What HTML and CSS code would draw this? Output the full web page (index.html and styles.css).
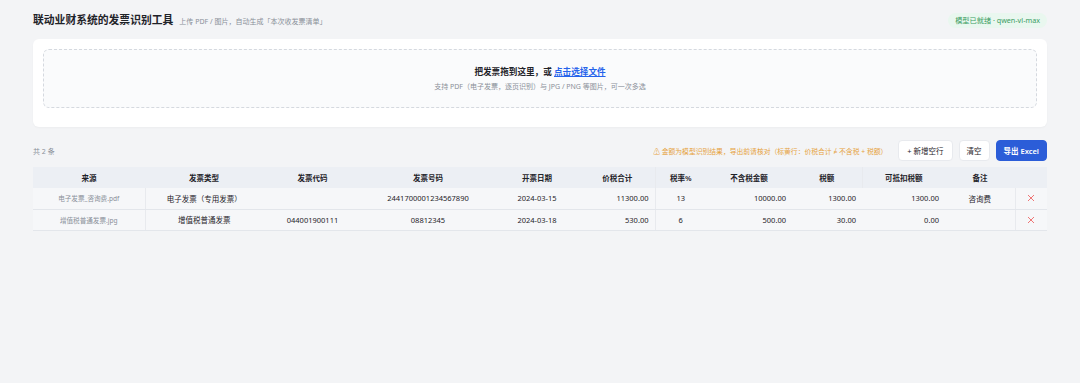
FILE: index.html
```html
<!DOCTYPE html>
<html lang="zh-CN">
<head>
    <meta charset="utf-8">
    <title>联动业财系统的发票识别工具</title>
    <link rel="stylesheet" href="styles.css">
</head>
<body>
    <div class="page">
        <header class="topbar">
            <div class="title-group">
                <h1>联动业财系统的发票识别工具</h1>
                <span class="subtitle">上传 PDF / 图片，自动生成「本次收发票清单」</span>
            </div>
            <span class="badge">模型已就绪 · qwen-vl-max</span>
        </header>

        <section class="card">
            <div class="dropzone">
                <p class="drop-title">把发票拖到这里，或 <a href="#">点击选择文件</a></p>
                <p class="drop-hint">支持 PDF（电子发票，逐页识别）与 JPG / PNG 等图片，可一次多选</p>
            </div>
        </section>

        <div class="toolbar">
            <span class="count">共 2 条</span>
            <div class="actions">
                <span class="warn">⚠ 金额为模型识别结果，导出前请核对（标黄行：价税合计 ≠ 不含税 + 税额）</span>
                <button class="btn">+ 新增空行</button>
                <button class="btn btn-small">清空</button>
                <button class="btn btn-primary">导出 Excel</button>
            </div>
        </div>

        <table class="invoice-table">
            <colgroup>
                <col style="width:112px">
                <col style="width:118px">
                <col style="width:99px">
                <col style="width:132px">
                <col style="width:86px">
                <col style="width:75px">
                <col style="width:51px">
                <col style="width:86px">
                <col style="width:70px">
                <col style="width:83px">
                <col style="width:70px">
                <col style="width:32px">
            </colgroup>
            <thead>
                <tr>
                    <th>来源</th>
                    <th>发票类型</th>
                    <th>发票代码</th>
                    <th>发票号码</th>
                    <th>开票日期</th>
                    <th class="line">价税合计</th>
                    <th>税率%</th>
                    <th>不含税金额</th>
                    <th class="line">税额</th>
                    <th>可抵扣税额</th>
                    <th>备注</th>
                    <th></th>
                </tr>
            </thead>
            <tbody>
                <tr>
                    <td class="src line">电子发票_咨询费.pdf</td>
                    <td>电子发票（专用发票）</td>
                    <td></td>
                    <td>2441700001234567890</td>
                    <td>2024-03-15</td>
                    <td class="num line">11300.00</td>
                    <td>13</td>
                    <td class="num">10000.00</td>
                    <td class="num">1300.00</td>
                    <td class="num">1300.00</td>
                    <td class="line">咨询费</td>
                    <td class="del">
                        <svg class="del-icon" viewBox="0 0 8 8"><path d="M1 1L7 7M7 1L1 7"/></svg>
                    </td>
                </tr>
                <tr>
                    <td class="src line">增值税普通发票.jpg</td>
                    <td>增值税普通发票</td>
                    <td>044001900111</td>
                    <td>08812345</td>
                    <td>2024-03-18</td>
                    <td class="num line">530.00</td>
                    <td>6</td>
                    <td class="num">500.00</td>
                    <td class="num">30.00</td>
                    <td class="num">0.00</td>
                    <td class="line"></td>
                    <td class="del">
                        <svg class="del-icon" viewBox="0 0 8 8"><path d="M1 1L7 7M7 1L1 7"/></svg>
                    </td>
                </tr>
            </tbody>
        </table>
    </div>
</body>
</html>
```

FILE: styles.css
```css
* {
    box-sizing: border-box;
}

body {
    margin: 0;
    background-color: #f3f4f6;
    font-family: "Noto Sans", "Noto Sans CJK SC", sans-serif;
    color: #1f2329;
}

.page {
    padding: 12px 33px 20px;
}

.topbar {
    display: flex;
    align-items: center;
    justify-content: space-between;
    height: 16px;
    margin-bottom: 11px;
}

.title-group {
    display: flex;
    align-items: baseline;
    gap: 6px;
}

h1 {
    margin: 0;
    font-size: 10.8px;
    font-weight: 700;
    line-height: 16px;
    color: #1f2329;
}

.subtitle {
    font-size: 7px;
    color: #8a9099;
}

.badge {
    padding: 3px 7px;
    border-radius: 8px;
    background-color: #e9f7ef;
    color: #3a9d62;
    font-size: 7.2px;
    line-height: 9px;
}

.card {
    background-color: #fff;
    border-radius: 6px;
    padding: 10px 10px 19px;
    box-shadow: 0 1px 2px rgba(0, 0, 0, 0.03);
}

.dropzone {
    height: 59px;
    border: 1px dashed #d5d9df;
    border-radius: 6px;
    background-color: #fafbfc;
    display: flex;
    flex-direction: column;
    align-items: center;
    justify-content: center;
    gap: 4px;
}

.dropzone p {
    margin: 0;
}

.drop-title {
    font-size: 8.6px;
    font-weight: 700;
    line-height: 11px;
    color: #1f2329;
}

.drop-title a {
    color: #2563eb;
    text-decoration: underline;
}

.drop-hint {
    font-size: 7px;
    line-height: 9px;
    color: #8a9099;
}

.toolbar {
    display: flex;
    align-items: center;
    justify-content: space-between;
    margin-top: 13px;
    height: 21px;
}

.count {
    font-size: 7px;
    color: #8a9099;
}

.actions {
    display: flex;
    align-items: center;
    gap: 6px;
}

.warn {
    margin-right: 5px;
    font-size: 6.8px;
    color: #e6a23c;
}

.btn {
    height: 21px;
    padding: 0 8px;
    border: 1px solid #e8eaee;
    border-radius: 4px;
    background-color: #fff;
    color: #1f2329;
    font-family: inherit;
    font-size: 7.5px;
    cursor: pointer;
}

.btn-small {
    padding: 0 7px;
}

.btn-primary {
    padding: 0 7px;
    border-color: #2b5dd8;
    background-color: #2b5dd8;
    color: #fff;
    font-weight: 600;
}

.invoice-table {
    width: 100%;
    margin-top: 6px;
    border-collapse: collapse;
    table-layout: fixed;
    font-size: 7.5px;
}

.invoice-table th {
    height: 21px;
    background-color: #eceff4;
    font-weight: 600;
    color: #1f2329;
}

.invoice-table td {
    height: 21px;
    padding: 0 6px;
    text-align: center;
    color: #1f2329;
    border-bottom: 1px solid #e3e6eb;
    background-color: #f6f7f9;
}

.invoice-table .line {
    border-right: 1px solid #e8eaee;
}

.invoice-table .num {
    text-align: right;
}

.invoice-table .src {
    font-size: 6.6px;
    color: #8a9099;
}

.invoice-table .del {
    padding: 0;
    color: #ec5f5f;
}

.del-icon {
    display: block;
    width: 8px;
    height: 8px;
    margin: 0 auto;
    stroke: currentColor;
    stroke-width: 0.85;
    fill: none;
}
```
